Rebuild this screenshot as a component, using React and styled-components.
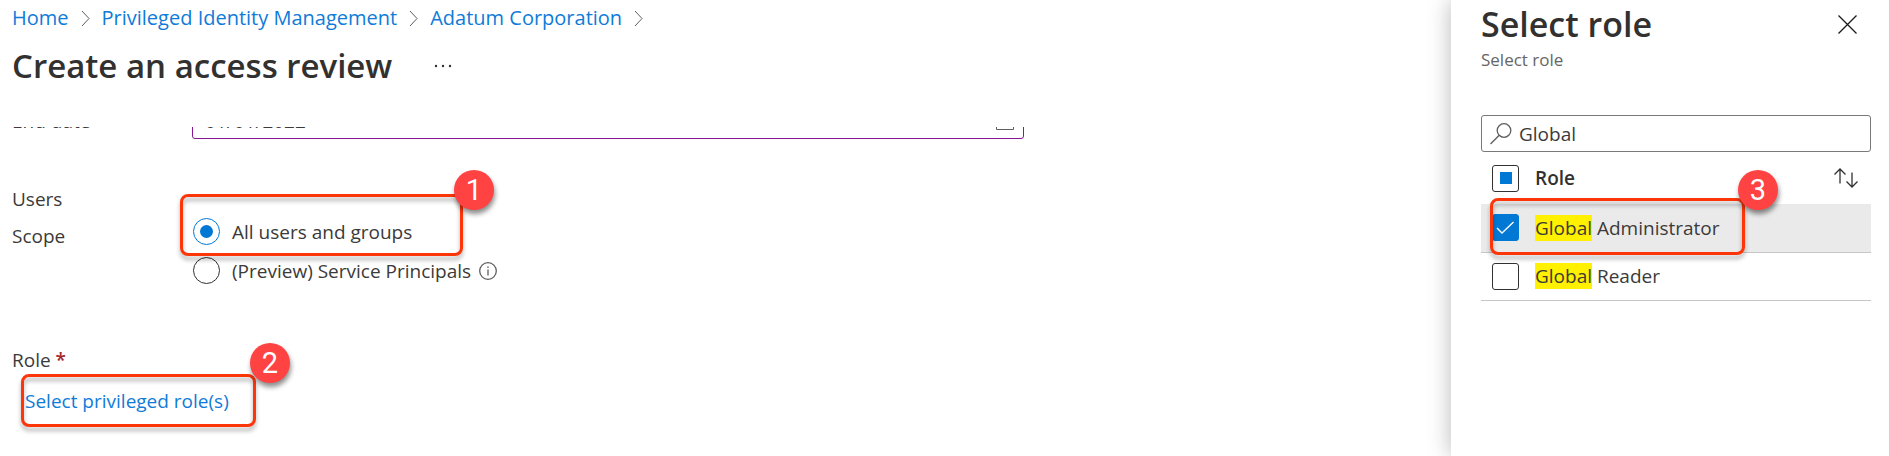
import React from "react";
import styled, { createGlobalStyle, css } from "styled-components";

const GlobalStyle = createGlobalStyle`
  *, *::before, *::after { box-sizing: border-box; }
  body {
    margin: 0;
    background: #fff;
    color: #3b3a39;
    font-family: "Open Sans", "Noto Sans", sans-serif;
    font-size: 19px;
    line-height: 28px;
  }
  input, button { font: inherit; color: inherit; }
`;

const Page = styled.div`
  display: flex;
  min-height: 100vh;
  overflow: hidden;
`;

const Main = styled.main`
  flex: 1;
  min-width: 0;
`;

const Breadcrumb = styled.nav`
  display: flex;
  align-items: center;
  gap: 12px;
  height: 36px;
  padding: 0 12px;
  font-size: 20px;
  white-space: nowrap;
`;

const Link = styled.a`
  color: #0f7bd8;
  text-decoration: none;
`;

const TitleBar = styled.header`
  display: flex;
  align-items: center;
  gap: 42px;
  height: 60px;
  margin-bottom: 31px;
  padding: 0 12px;
`;

const Title = styled.h1`
  margin: 0;
  color: #323130;
  font-size: 33px;
  line-height: 44px;
  font-weight: 600;
  white-space: nowrap;
`;

const IconButton = styled.button`
  display: flex;
  padding: 0;
  border: 0;
  background: none;
`;

const Form = styled.form`
  overflow: hidden;
  padding: 0 12px 24px;
`;

const Field = styled.div`
  display: grid;
  grid-template-columns: 180px minmax(0, 832px);
  margin-top: ${(p) => (p.$scrolled ? "-24px" : "0")};
`;

const FieldLabel = styled.label`
  line-height: 36px;
`;

const DateBox = styled.div`
  display: flex;
  align-items: center;
  height: 36px;
  padding: 0 9px 0 12px;
  border: 1px solid #881798;
  border-radius: 3px;
`;

const TextInput = styled.input`
  flex: 1;
  min-width: 0;
  padding: 0;
  border: 0;
  outline: 0;
  background: none;
`;

const SectionTitle = styled.div`
  margin-top: 41px;
  line-height: 38px;
`;

const RadioGroup = styled.div`
  display: flex;
  flex-direction: column;
  align-items: flex-start;
  gap: 12px;
`;

const RadioRow = styled.div`
  position: relative;
  display: flex;
  align-items: center;
  gap: 8px;
  height: 27px;
  padding-left: 1px;
`;

const RadioLabel = styled.label`
  display: flex;
  align-items: center;
  gap: 12px;
  white-space: nowrap;
`;

const Radio = styled.input`
  appearance: none;
  display: grid;
  place-items: center;
  width: 27px;
  height: 27px;
  margin: 0;
  border: 1px solid #323130;
  border-radius: 50%;
  &:checked { border-color: #0078d4; }
  &:checked::before {
    content: "";
    width: 13px;
    height: 13px;
    border-radius: 50%;
    background: #0078d4;
  }
`;

const RoleLabel = styled.div`
  margin-top: 58px;
  line-height: 36px;
`;

const Required = styled.span`
  color: #a4262c;
  font-weight: 600;
`;

const RolePicker = styled.div`
  position: relative;
  width: fit-content;
  margin: 9px 0 0 13px;
`;

const Callout = styled.div`
  position: absolute;
  z-index: 2;
  left: ${(p) => p.$left}px;
  top: ${(p) => p.$top}px;
  width: ${(p) => p.$width}px;
  height: ${(p) => p.$height}px;
  border: 3px solid #fd360a;
  border-radius: 8px;
  filter: drop-shadow(0 4px 2px rgba(0, 0, 0, 0.3));
  pointer-events: none;
`;

const Badge = styled.span`
  position: absolute;
  z-index: 3;
  left: ${(p) => p.$left}px;
  top: ${(p) => p.$top}px;
  width: 40px;
  height: 40px;
  border-radius: 50%;
  background: #ff4242;
  box-shadow: 1px 4px 5px rgba(0, 0, 0, 0.45);
  color: #fff;
  font: 29px/40px Roboto, sans-serif;
  text-align: center;
  pointer-events: none;
`;

const Panel = styled.aside`
  position: relative;
  flex: none;
  width: 438px;
  padding: 0 18px 24px 30px;
  background: #fff;
  box-shadow: 0 0 22px rgba(0, 0, 0, 0.28);
`;

const PanelHead = styled.header`
  display: flex;
  justify-content: space-between;
  align-items: center;
  height: 49px;
  padding-right: 14px;
`;

const PanelTitle = styled.h2`
  margin: 0;
  color: #323130;
  font-size: 34px;
  line-height: 49px;
  font-weight: 600;
`;

const Subtitle = styled.p`
  margin: 0 0 44px;
  color: #666;
  font-size: 17px;
  line-height: 22px;
`;

const SearchBox = styled.label`
  display: flex;
  align-items: center;
  gap: 7px;
  height: 37px;
  padding: 0 8px;
  border: 1px solid #7a7978;
  border-radius: 3px;
`;

const RoleTable = styled.table`
  width: 100%;
  border-collapse: collapse;
  table-layout: fixed;
`;

const Row = styled.tr`
  height: ${(p) => (p.$head ? 52 : 48)}px;
  ${(p) => p.$selected && css`background: #ebeaea;`}
  ${(p) => !p.$head && css`border-bottom: 1px solid #c8c6c4;`}
`;

const cell = css`
  padding: 0;
  text-align: left;
  vertical-align: middle;
`;

const HeadCell = styled.th`
  ${cell}
  width: ${(p) => p.$width || "auto"};
  color: #323130;
  font-weight: 600;
`;

const Cell = styled.td`
  ${cell}
`;

const Anchor = styled.div`
  position: relative;
  padding-left: 11px;
`;

const CheckMark = styled.span`
  position: relative;
  display: grid;
  width: 27px;
  height: 27px;
  place-items: center;
  svg { position: absolute; pointer-events: none; }
`;

const Checkbox = styled.input`
  appearance: none;
  display: grid;
  place-items: center;
  width: 27px;
  height: 27px;
  margin: 0;
  border: 1px solid #323130;
  border-radius: 3px;
  background: #fff;
  &:checked { border-color: #0078d4; background: #0078d4; }
  &:indeterminate::before {
    content: "";
    width: 12px;
    height: 12px;
    background: #0078d4;
  }
`;

const Highlight = styled.mark`
  background: #fff100;
  color: inherit;
`;

function Chevron() {
  return (
    <svg width="9" height="17" viewBox="0 0 9 17" fill="none" stroke="#605e5c" aria-hidden="true">
      <path d="M1 1l7 7.5L1 16" />
    </svg>
  );
}

function SelectBox({ id, label, checked, mixed }) {
  const setMixed = (el) => {
    if (el) el.indeterminate = Boolean(mixed);
  };
  return (
    <CheckMark>
      <Checkbox id={id} type="checkbox" aria-label={label} defaultChecked={checked} ref={setMixed} />
      {checked && (
        <svg width="19" height="14" viewBox="0 0 19 14" fill="none" stroke="#fff" strokeWidth="1.4" aria-hidden="true">
          <path d="M1 7l5 5L17.500 1" />
        </svg>
      )}
    </CheckMark>
  );
}

const roles = [
  { id: "global-admin", rest: "Administrator", selected: true },
  { id: "global-reader", rest: "Reader", selected: false },
];

export default function App() {
  return (
    <Page>
      <GlobalStyle />
      <Main>
        <Breadcrumb aria-label="Breadcrumb">
          {["Home", "Privileged Identity Management", "Adatum Corporation"].map((name) => (
            <React.Fragment key={name}>
              <Link href="#">{name}</Link>
              <Chevron />
            </React.Fragment>
          ))}
        </Breadcrumb>
        <TitleBar>
          <Title>Create an access review</Title>
          <IconButton type="button" aria-label="More">
            <svg width="18" height="4" viewBox="0 0 18 4" fill="#323130">
              <circle cx="2" cy="2" r="1.200" />
              <circle cx="9" cy="2" r="1.200" />
              <circle cx="16" cy="2" r="1.200" />
            </svg>
          </IconButton>
        </TitleBar>
        <Form>
          <Field $scrolled>
            <FieldLabel htmlFor="end-date">End date</FieldLabel>
            <DateBox>
              <TextInput id="end-date" defaultValue="01/01/2022" />
              <svg width="18" height="18" viewBox="0 0 18 18" fill="none" stroke="#605e5c" aria-hidden="true">
                <path d="M.5 2.500h17v15H.5zM.5 6.500h17M4.500 0v4M13.500 0v4" />
              </svg>
            </DateBox>
          </Field>
          <SectionTitle>Users</SectionTitle>
          <Field role="radiogroup" aria-labelledby="scope">
            <FieldLabel as="span" id="scope">Scope</FieldLabel>
            <RadioGroup>
              <RadioRow>
                <RadioLabel>
                  <Radio type="radio" name="scope" defaultChecked />
                  All users and groups
                </RadioLabel>
                <Callout $left={-12} $top={-24} $width={283} $height={62} />
                <Badge $left={262} $top={-48}>1</Badge>
              </RadioRow>
              <RadioRow>
                <RadioLabel>
                  <Radio type="radio" name="scope" />
                  (Preview) Service Principals
                </RadioLabel>
                <svg width="18" height="18" viewBox="0 0 18 18" fill="none" stroke="#605e5c" strokeWidth="1.300" aria-hidden="true">
                  <circle cx="9" cy="9" r="8.300" />
                  <path d="M9 7.500v6M9 4.500v1.500" />
                </svg>
              </RadioRow>
            </RadioGroup>
          </Field>
          <RoleLabel>
            Role <Required>*</Required>
          </RoleLabel>
          <RolePicker>
            <Link href="#">Select privileged role(s)</Link>
            <Callout $left={-4} $top={-13} $width={235} $height={53} />
            <Badge $left={225} $top={-44}>2</Badge>
          </RolePicker>
        </Form>
      </Main>
      <Panel>
        <PanelHead>
          <PanelTitle>Select role</PanelTitle>
          <IconButton type="button" aria-label="Close">
            <svg width="19" height="19" viewBox="0 0 19 19" fill="none" stroke="#1b1a19" strokeWidth="1.300">
              <path d="M.5.5l18 18M18.500.5l-18 18" />
            </svg>
          </IconButton>
        </PanelHead>
        <Subtitle>Select role</Subtitle>
        <SearchBox>
          <svg width="22" height="22" viewBox="0 0 22 22" fill="none" stroke="#605e5c" strokeWidth="1.300" aria-hidden="true">
            <circle cx="14" cy="7.500" r="6.800" />
            <path d="M9.200 12.300L.5 21" />
          </svg>
          <TextInput aria-label="Search roles" defaultValue="Global" />
        </SearchBox>
        <RoleTable>
          <thead>
            <Row $head>
              <HeadCell $width="54px">
                <Anchor><SelectBox label="Select all roles" mixed /></Anchor>
              </HeadCell>
              <HeadCell>Role</HeadCell>
              <HeadCell $width="38px">
                <IconButton type="button" aria-label="Sort">
                  <svg width="26" height="20" viewBox="0 0 26 20" fill="none" stroke="#323130" strokeWidth="1.300">
                    <path d="M7 15.500V1M1.500 6.500L7 1l5.500 5.500M19 4.500V19M13.500 13.500L19 19l5.500-5.500" />
                  </svg>
                </IconButton>
              </HeadCell>
            </Row>
          </thead>
          <tbody>
            {roles.map((role) => (
              <Row key={role.id} $selected={role.selected}>
                <Cell>
                  <Anchor>
                    <SelectBox id={role.id} checked={role.selected} />
                    {role.selected && (
                      <>
                        <Callout $left={9} $top={-16} $width={255} $height={57} />
                        <Badge $left={257} $top={-44}>3</Badge>
                      </>
                    )}
                  </Anchor>
                </Cell>
                <Cell colSpan={2}>
                  <label htmlFor={role.id}>
                    <Highlight>Global</Highlight> {role.rest}
                  </label>
                </Cell>
              </Row>
            ))}
          </tbody>
        </RoleTable>
      </Panel>
    </Page>
  );
}
